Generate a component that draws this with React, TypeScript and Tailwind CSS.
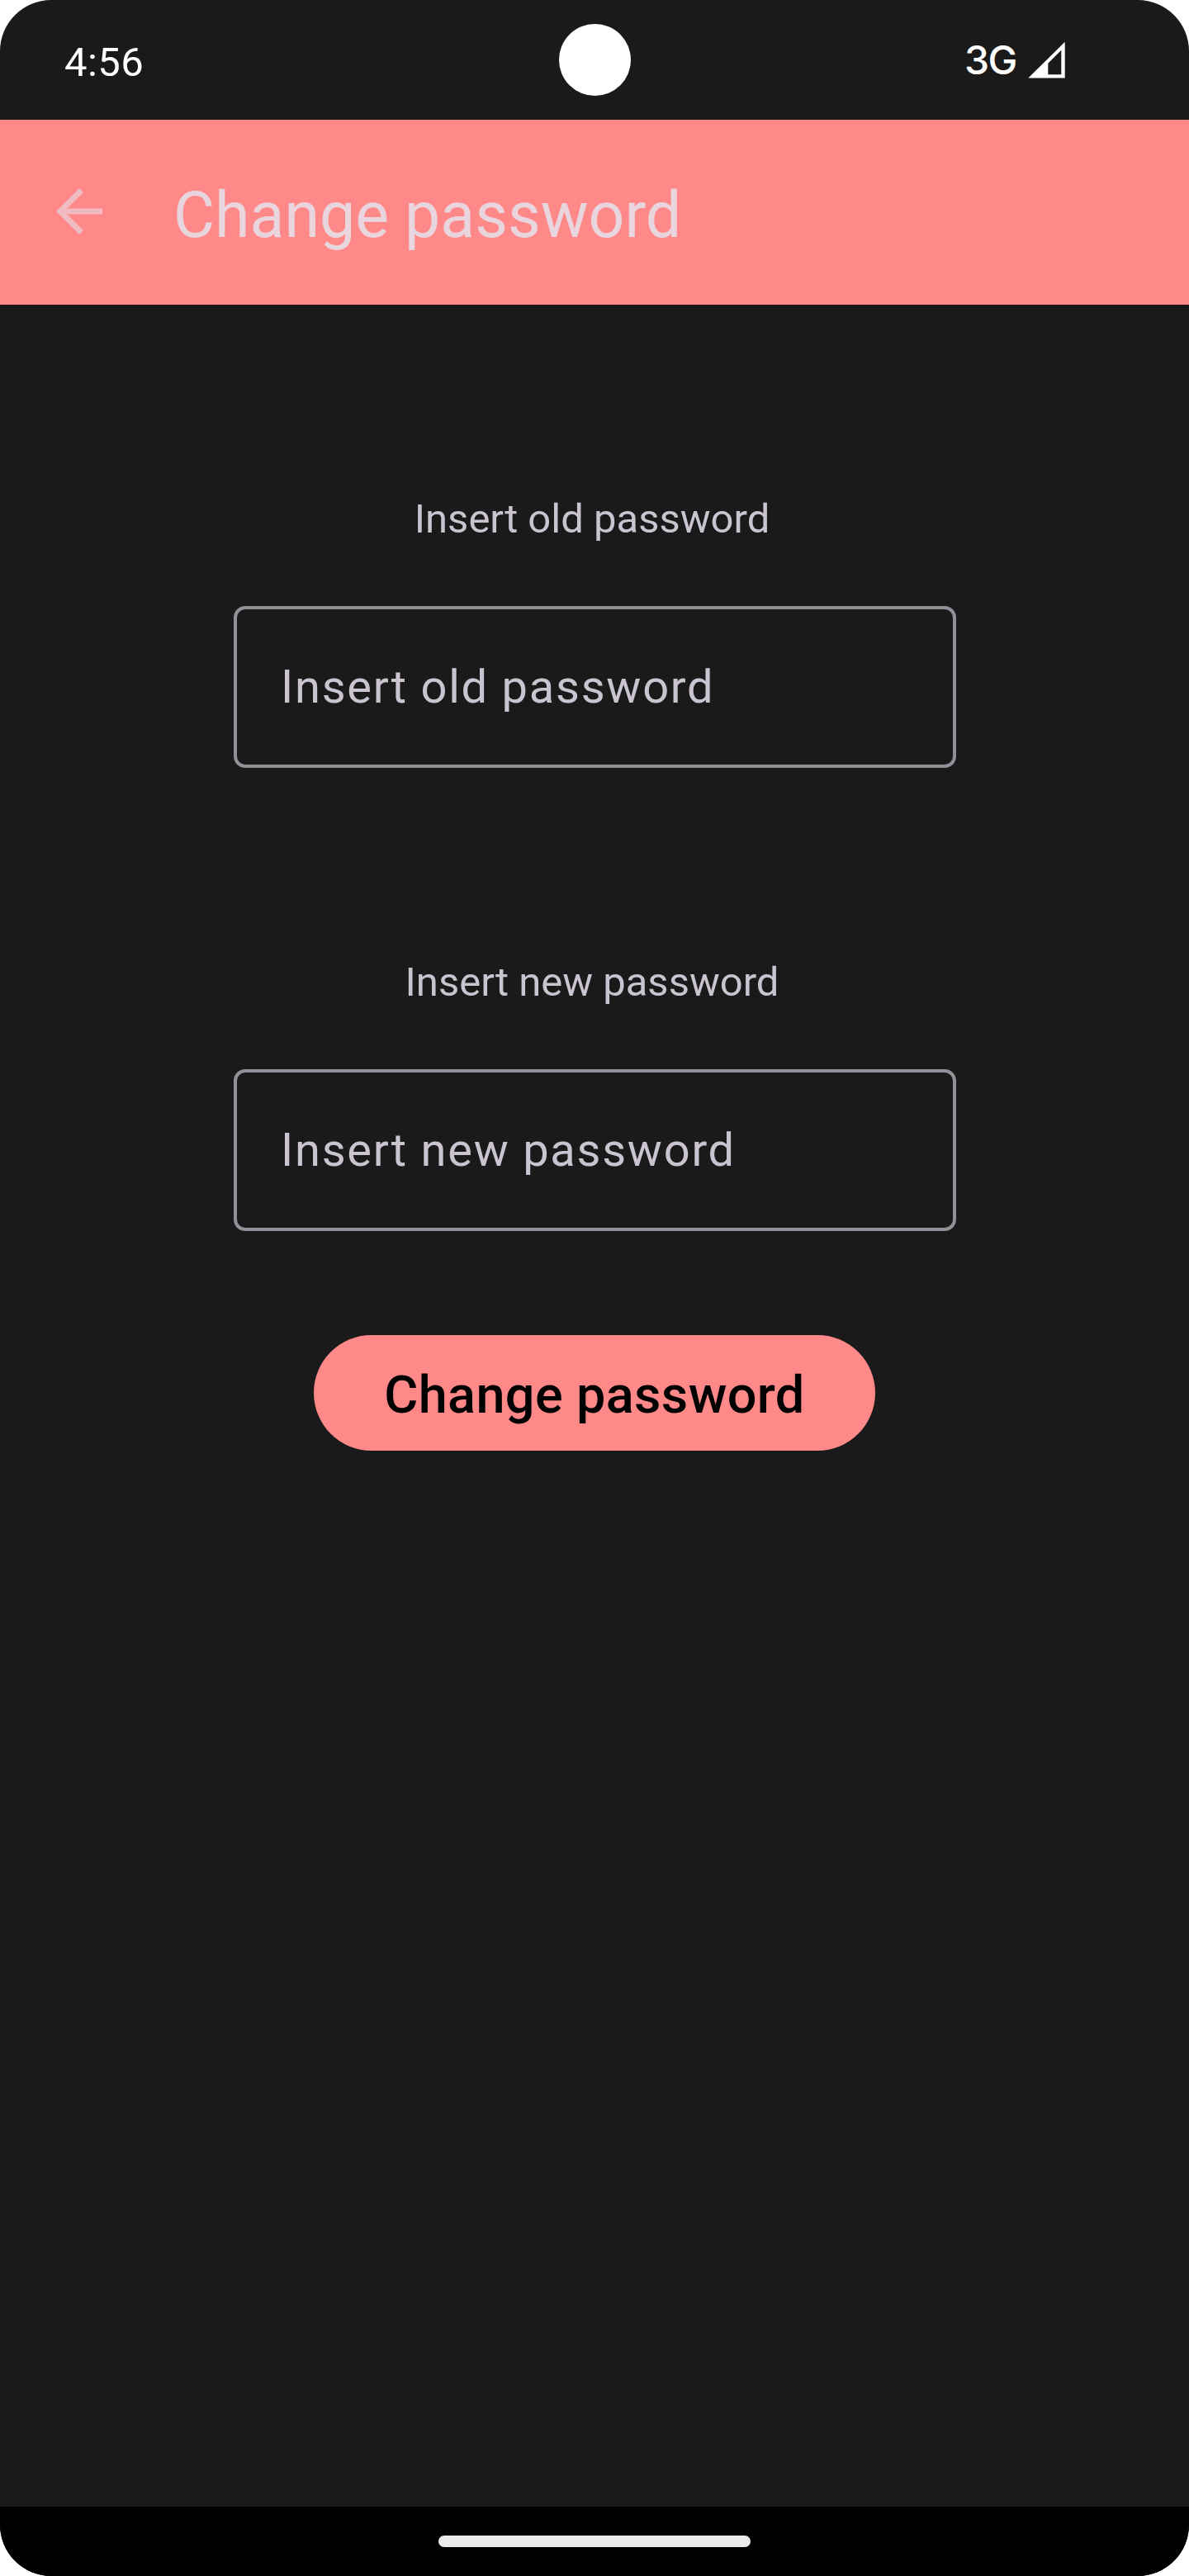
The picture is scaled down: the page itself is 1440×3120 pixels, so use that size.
import React from "react";

function StatusBar() {
  return (
    <header className="grid h-[145px] grid-cols-[677px_87px_1fr] items-start">
      <span className="ml-[78px] mt-[47px] text-[49px] leading-[57px] tracking-[0.4px] text-white">4:56</span>
      <div className="mt-[29px] size-[87px] rounded-full bg-white" />
      <div className="flex items-start justify-end pr-[150px]">
        <span className="mr-[14px] mt-[43px] text-[48px] font-[Inter] font-medium leading-[59px] tracking-[-1.5px] text-white">3G</span>
        <svg className="mt-[50px] h-[45px] w-[45px]" viewBox="0 0 45 45" fill="#fff" fillRule="evenodd">
          <path d="M.3 44.6H44.7V.7ZM24.3 40.3V26.7L40.3 10.7V40.3Z" />
        </svg>
      </div>
    </header>
  );
}

function AppBar() {
  return (
    <div className="flex h-[224px] items-start bg-[#ff8989] pl-[54px]">
      <svg className="mt-[68.5px] size-[84px] shrink-0" viewBox="0 0 24 24" fill="#f2bbc2">
        <path d="M20 11H7.83l5.59-5.59L12 4l-8 8 8 8 1.41-1.41L7.83 13H20v-2z" />
      </svg>
      <h1 className="ml-[72px] mt-[71px] text-[77px] leading-[90px] text-[#e8d5de]">Change password</h1>
    </div>
  );
}

function PasswordField({ label }: { label: string }) {
  return (
    <div className="flex w-[875px] flex-col">
      <label className="-ml-[6px] text-center text-[49px] leading-[57px] text-[#cac4d0]">{label}</label>
      <div className="mt-[77px] flex h-[196px] items-center rounded-[14px] border-4 border-[#938f99] pl-[53.5px]">
        <span className="text-[56px] leading-[66px] tracking-[1.75px] text-[#cac4d0]">{label}</span>
      </div>
    </div>
  );
}

export default function App() {
  return (
    <div className="h-[3120px] w-[1440px] bg-white">
      <div className="flex h-full flex-col overflow-hidden rounded-[62px] bg-[#1a1a1a] font-[Roboto,sans-serif]">
        <StatusBar />
        <AppBar />
        <main className="flex flex-1 flex-col items-center gap-[231px] pt-[231px]">
          <PasswordField label="Insert old password" />
          <div className="flex flex-col items-center">
            <PasswordField label="Insert new password" />
            <button className="mt-[126px] flex h-[140px] w-[680px] items-center justify-center rounded-full bg-[#ff8989] pt-[4px] text-[63px] font-medium leading-[73px] tracking-[0.35px] text-black">
              Change password
            </button>
          </div>
        </main>
        <nav className="flex h-[84px] shrink-0 items-start justify-center bg-black pt-[35px]">
          <div className="h-[14px] w-[378px] rounded-[7px] bg-[#ebebeb]" />
        </nav>
      </div>
    </div>
  );
}
